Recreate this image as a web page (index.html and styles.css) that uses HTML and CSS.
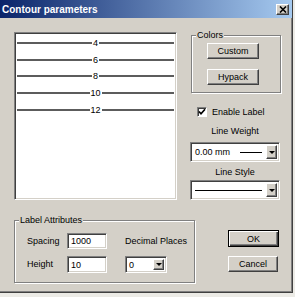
FILE: index.html
```html
<html>
<head>
    <title>Contour parameters</title>
    <link rel="stylesheet" href="styles.css">
</head>
<body>
    <div class="dialog">
        <div class="titlebar">
            <span class="title">Contour parameters</span>
            <span class="close">
                <svg width="8" height="7" viewBox="0 0 8 7">
                    <path d="M1 0.5 L7 6.5 M7 0.5 L1 6.5" stroke="#000" stroke-width="1.6" fill="none"/>
                </svg>
            </span>
        </div>

        <div class="content">
            <div class="top">
                <div class="preview">
                    <div class="contour"><span>4</span></div>
                    <div class="contour"><span>6</span></div>
                    <div class="contour"><span>8</span></div>
                    <div class="contour"><span>10</span></div>
                    <div class="contour"><span>12</span></div>
                </div>

                <div class="side">
                    <div class="group colors">
                        <span class="group-title">Colors</span>
                        <button class="btn">Custom</button>
                        <button class="btn">Hypack</button>
                    </div>

                    <div class="check">
                        <span class="checkbox">
                            <svg width="8" height="8" viewBox="0 0 8 8">
                                <path d="M1 3.5 L3 5.8 L7 1.2" stroke="#000" stroke-width="1.7" fill="none"/>
                            </svg>
                        </span>
                        <span>Enable Label</span>
                    </div>

                    <div class="caption">Line Weight</div>
                    <div class="combo">
                        <span class="combo-text">0.00 mm</span>
                        <span class="combo-line short"></span>
                        <span class="drop"></span>
                    </div>

                    <div class="caption">Line Style</div>
                    <div class="combo">
                        <span class="combo-line"></span>
                        <span class="drop"></span>
                    </div>
                </div>
            </div>

            <div class="bottom">
                <div class="group attrs">
                    <span class="group-title">Label Attributes</span>
                    <span class="lbl">Spacing</span>
                    <span class="field">1000</span>
                    <span class="lbl">Decimal Places</span>
                    <span class="lbl">Height</span>
                    <span class="field tall">10</span>
                    <div class="combo small">
                        <span class="combo-text">0</span>
                        <span class="drop"></span>
                    </div>
                </div>

                <div class="actions">
                    <button class="btn default">OK</button>
                    <button class="btn cancel">Cancel</button>
                </div>
            </div>
        </div>
    </div>
</body>
</html>
```

FILE: styles.css
```css
body {
    margin: 0;
    background-color: #ecebe6;
    font-family: "Liberation Sans", Arial, sans-serif;
    font-size: 9px;
    color: #000;
}

.dialog {
    width: 292px;
    height: 292px;
    background-color: #d4d0c8;
    border-right: 1px solid #404040;
    border-bottom: 1px solid #404040;
    box-shadow: inset -1px -1px 0 #808080;
}

.titlebar {
    height: 18px;
    display: flex;
    align-items: center;
    justify-content: space-between;
    padding: 0 3px 0 2px;
    background: linear-gradient(to right, #0a246a, #a6caf0);
}

.title {
    color: #fff;
    font-weight: bold;
    font-size: 10px;
}

.close {
    width: 11px;
    height: 9px;
    display: flex;
    align-items: center;
    justify-content: center;
    background-color: #d4d0c8;
    border: 1px solid;
    border-color: #fff #404040 #404040 #fff;
    box-shadow: inset -1px -1px 0 #808080;
}

.content {
    padding: 14px 0 0 14px;
}

.top {
    display: flex;
    gap: 13px;
    height: 168px;
}

/* preview list */
.preview {
    width: 163px;
    box-sizing: border-box;
    background-color: #fff;
    border: 1px solid;
    border-color: #808080 #fff #fff #808080;
    box-shadow: inset 1px 1px 0 #404040, inset -1px -1px 0 #d4d0c8;
    padding: 1.5px 2px 0 2px;
}

.contour {
    height: 16.7px;
    display: flex;
    align-items: center;
}

.contour::before,
.contour::after {
    content: "";
    flex: 1;
    height: 2px;
    background-color: #5c5c5c;
}

.contour span {
    padding: 0 1px;
    line-height: 10px;
}

/* right column */
.side {
    width: 90px;
    display: flex;
    flex-direction: column;
    padding-top: 3px;
}

.group {
    position: relative;
    box-sizing: border-box;
    border: 1px solid #808080;
    box-shadow: inset 1px 1px 0 #fff, 1px 1px 0 #fff;
}

.group-title {
    position: absolute;
    top: -6px;
    left: 4px;
    padding: 0 1px;
    line-height: 11px;
    background-color: #d4d0c8;
}

.colors {
    margin-left: 1px;
    width: 90px;
    height: 58px;
    display: flex;
    flex-direction: column;
    align-items: flex-start;
    padding: 7px 0 0 15px;
    gap: 10px;
}

.btn {
    font-family: inherit;
    font-size: 9px;
    color: #000;
    background-color: #d4d0c8;
    width: 52px;
    height: 16px;
    padding: 0;
    margin: 0;
    border: 1px solid;
    border-color: #fff #404040 #404040 #fff;
    box-shadow: inset -1px -1px 0 #808080;
    border-radius: 0;
}

.check {
    display: flex;
    align-items: center;
    gap: 5px;
    margin: 14px 0 0 7px;
    height: 10px;
}

.checkbox {
    width: 8px;
    height: 8px;
    display: flex;
    align-items: center;
    justify-content: center;
    background-color: #fff;
    border: 1px solid;
    border-color: #808080 #fff #fff #808080;
    box-shadow: inset 1px 1px 0 #404040;
}

.caption {
    text-align: center;
    line-height: 11px;
    margin-top: 9px;
}

.caption + .combo {
    margin-top: 5px;
}

.combo + .caption {
    margin-top: 5px;
}

.combo {
    height: 20px;
    box-sizing: border-box;
    display: flex;
    align-items: center;
    gap: 4px;
    background-color: #fff;
    border: 1px solid;
    border-color: #808080 #fff #fff #808080;
    box-shadow: inset 1px 1px 0 #404040, inset -1px -1px 0 #d4d0c8;
    padding: 2px 2px 2px 4px;
}

.side .combo:last-child {
    margin-top: 2px;
}

.combo-text {
    line-height: 10px;
}

.combo-line {
    flex: 1;
    height: 1px;
    background-color: #000;
}

.combo-line.short {
    margin-left: 6px;
}

.drop {
    align-self: stretch;
    width: 9px;
    margin-left: auto;
    background-color: #d4d0c8;
    border: 1px solid;
    border-color: #fff #404040 #404040 #fff;
    box-shadow: inset -1px -1px 0 #808080;
    display: flex;
    align-items: center;
    justify-content: center;
}

.drop::after {
    content: "";
    border-left: 3px solid transparent;
    border-right: 3px solid transparent;
    border-top: 3px solid #000;
}

/* bottom row */
.bottom {
    display: flex;
    margin-top: 20px;
}

.attrs {
    width: 181px;
    height: 63px;
    display: grid;
    grid-template-columns: 40px 58px 64px;
    grid-template-rows: 16px 17px;
    row-gap: 7px;
    align-items: center;
    padding: 12px 0 0 12px;
}

.lbl {
    line-height: 11px;
    white-space: nowrap;
}

.field {
    width: 40px;
    height: 16px;
    box-sizing: border-box;
    background-color: #fff;
    border: 1px solid;
    border-color: #808080 #fff #fff #808080;
    box-shadow: inset 1px 1px 0 #404040, inset -1px -1px 0 #d4d0c8;
    padding: 2px 3px;
    line-height: 11px;
}

.field.tall {
    height: 17px;
    padding-top: 3px;
}

.combo.small {
    width: 42px;
    height: 17px;
    padding: 2px 2px 2px 3px;
}

.actions {
    display: flex;
    flex-direction: column;
    margin: 10px 0 0 33px;
    gap: 9px;
}

.btn.default {
    width: 51px;
    height: 17px;
    border: 1px solid #000;
    box-shadow: inset 1px 1px 0 #fff, inset -1px -1px 0 #404040, inset -2px -2px 0 #808080;
}

.btn.cancel {
    width: 50px;
}
```
